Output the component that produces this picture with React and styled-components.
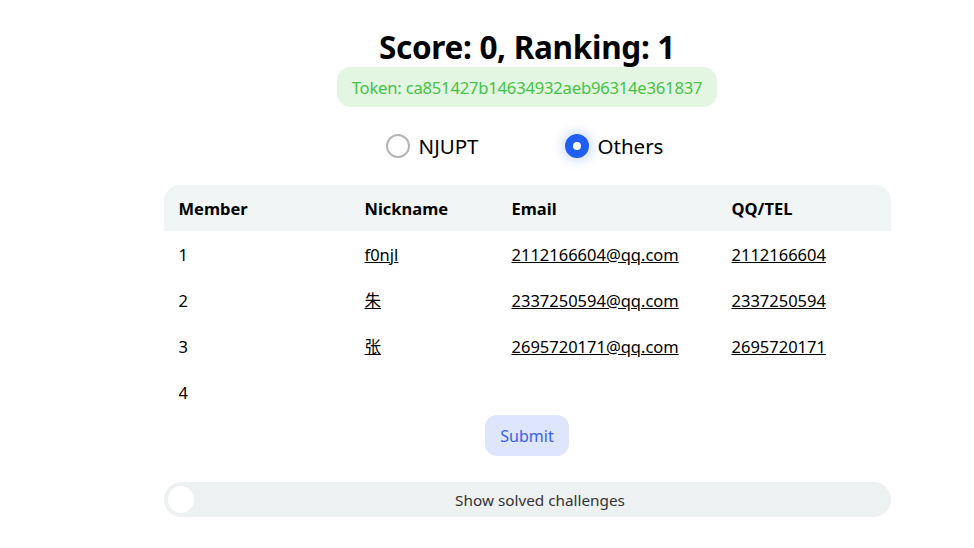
import styled, { createGlobalStyle } from "styled-components";

const GlobalStyle = createGlobalStyle`
  body {
    margin: 0;
    background: #fff;
    font-family: "Noto Sans", "Noto Sans CJK SC", sans-serif;
    color: #000;
  }
`;

const members = [
  { id: 1, nick: "f0njl", email: "2112166604@qq.com", tel: "2112166604" },
  { id: 2, nick: "朱", email: "2337250594@qq.com", tel: "2337250594" },
  { id: 3, nick: "张", email: "2695720171@qq.com", tel: "2695720171" },
  { id: 4 },
];

const Page = styled.div`
  display: flex;
  justify-content: center;
  padding-left: 80px;
`;

const Main = styled.main`
  width: 727px;
  display: flex;
  flex-direction: column;
  align-items: center;
`;

const Title = styled.h1`
  margin: 27px 0 0;
  font-size: 31.5px;
  line-height: 40px;
  font-weight: 700;
  letter-spacing: -0.3px;
`;

const Token = styled.div`
  padding: 0 15px;
  height: 40px;
  display: flex;
  align-items: center;
  background: #e3f6e1;
  color: #46c346;
  border-radius: 14px;
  font-size: 16.6px;
  letter-spacing: -0.2px;
`;

const RadioGroup = styled.div`
  display: flex;
  gap: 86px;
  margin-top: 25px;
  margin-right: 5px;
`;

const RadioLabel = styled.label`
  display: flex;
  align-items: center;
  gap: 9px;
  font-size: 20.5px;
`;

const RadioDot = styled.span`
  width: 24px;
  height: 24px;
  border-radius: 50%;
  box-sizing: border-box;
  border: ${(p) => (p.$checked ? "8px solid #1f5ff4" : "2px solid #b3b5b8")};
  background: #fff;
  box-shadow: ${(p) => (p.$checked ? "0 0 10px 4px rgba(31, 95, 244, 0.18)" : "none")};
`;

const Table = styled.table`
  width: 100%;
  table-layout: fixed;
  margin-top: 25px;
  border-collapse: separate;
  border-spacing: 0;
  font-size: 16.5px;
`;

const HeadCell = styled.th`
  text-align: left;
  font-weight: 700;
  height: 46px;
  padding: 0 15px;
  background: #f2f5f5;
  width: ${(p) => p.$w || "auto"};
  &:first-child {
    border-top-left-radius: 16px;
  }
  &:last-child {
    border-top-right-radius: 16px;
  }
`;

const Cell = styled.td`
  height: 46px;
  padding: 0 15px;
  white-space: nowrap;
  a {
    color: #000;
    text-decoration: underline;
  }
`;

const SubmitButton = styled.button`
  height: 41px;
  padding: 0 15px;
  border: none;
  border-radius: 12px;
  background: #dde6fd;
  color: #3a5ef0;
  font-family: inherit;
  font-size: 16px;
`;

const Toggle = styled.div`
  position: relative;
  margin-top: 26px;
  width: 100%;
  box-sizing: border-box;
  padding-left: 26px;
  height: 35px;
  border-radius: 18px;
  background: #eef1f2;
  display: flex;
  align-items: center;
  justify-content: center;
  font-size: 15.3px;
  color: #333;
`;

const Knob = styled.span`
  position: absolute;
  left: 4px;
  top: 4px;
  width: 26px;
  height: 27px;
  border-radius: 50%;
  background: #fff;
`;

export default function App() {
  return (
    <Page>
      <GlobalStyle />
      <Main>
        <Title>Score: 0, Ranking: 1</Title>
        <Token>Token: ca851427b14634932aeb96314e361837</Token>
        <RadioGroup>
          <RadioLabel>
            <RadioDot />
            NJUPT
          </RadioLabel>
          <RadioLabel>
            <RadioDot $checked />
            Others
          </RadioLabel>
        </RadioGroup>
        <Table>
          <thead>
            <tr>
              <HeadCell $w="156px">Member</HeadCell>
              <HeadCell $w="117px">Nickname</HeadCell>
              <HeadCell $w="190px">Email</HeadCell>
              <HeadCell>QQ/TEL</HeadCell>
            </tr>
          </thead>
          <tbody>
            {members.map((m) => (
              <tr key={m.id}>
                <Cell>{m.id}</Cell>
                <Cell>{m.nick && <a href="#">{m.nick}</a>}</Cell>
                <Cell>{m.email && <a href="#">{m.email}</a>}</Cell>
                <Cell>{m.tel && <a href="#">{m.tel}</a>}</Cell>
              </tr>
            ))}
          </tbody>
        </Table>
        <SubmitButton>Submit</SubmitButton>
        <Toggle>
          <Knob />
          Show solved challenges
        </Toggle>
      </Main>
    </Page>
  );
}
